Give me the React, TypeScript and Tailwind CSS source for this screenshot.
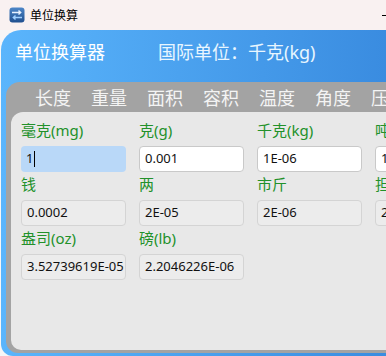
import React from "react";

type Field = { label: string; value: string; kind: "focus" | "edit" | "read" };

const rows: Field[][] = [
  [
    { label: "毫克(mg)", value: "1", kind: "focus" },
    { label: "克(g)", value: "0.001", kind: "edit" },
    { label: "千克(kg)", value: "1E-06", kind: "edit" },
    { label: "吨", value: "1E-09", kind: "edit" },
  ],
  [
    { label: "钱", value: "0.0002", kind: "read" },
    { label: "两", value: "2E-05", kind: "read" },
    { label: "市斤", value: "2E-06", kind: "read" },
    { label: "担", value: "2E-08", kind: "read" },
  ],
  [
    { label: "盎司(oz)", value: "3.52739619E-05", kind: "read" },
    { label: "磅(lb)", value: "2.2046226E-06", kind: "read" },
  ],
];

const tabs = ["长度", "重量", "面积", "容积", "温度", "角度", "压强"];

function AppIcon() {
  return (
    <svg width="16" height="16" viewBox="0 0 16 16">
      <defs>
        <linearGradient id="ic" x1="0" y1="0" x2="0" y2="1">
          <stop offset="0" stopColor="#4d86c8" />
          <stop offset="1" stopColor="#1f4f8f" />
        </linearGradient>
      </defs>
      <rect x="0.5" y="0.5" width="15" height="15" rx="3" fill="url(#ic)" />
      <path d="M3 5.5h8.5M9.5 3.5l2.2 2-2.2 2" stroke="#e8f2ff" strokeWidth="1.4" fill="none" />
      <path d="M13 10.5H4.5M6.5 8.5l-2.2 2 2.2 2" stroke="#9fd0ff" strokeWidth="1.4" fill="none" />
    </svg>
  );
}

function Input({ f }: { f: Field }) {
  const base = "mt-[5px] h-[26px] rounded-[4px] pl-[5px] flex items-center text-[13px] text-[#111]";
  if (f.kind === "focus") {
    return (
      <div className={`${base} bg-[#b9d8f8]`}>
        {f.value}
        <span className="ml-[1px] w-[1px] h-[16px] bg-black" />
      </div>
    );
  }
  if (f.kind === "edit") {
    return <div className={`${base} bg-white border border-[#c9c9c9]`}>{f.value}</div>;
  }
  return <div className={`${base} bg-[#ececec] border border-[#d4d4d4]`}>{f.value}</div>;
}

export default function App() {
  return (
    <div className="w-[386px] h-[356px] overflow-hidden bg-[#f6f6f6] flex flex-col font-['Noto_Sans','Noto_Sans_CJK_SC',sans-serif]">
      <div className="h-[30px] flex-none bg-[#f9f1f1] flex items-center pl-[9px] relative">
        <AppIcon />
        <span className="ml-[5px] text-[12px] leading-none text-black font-['Noto_Sans_CJK_SC',sans-serif]">单位换算</span>
        <span className="absolute left-[382px] top-[15px] w-[10px] h-[1px] bg-black" />
      </div>

      <div className="flex-1 ml-[1px] rounded-tl-[20px] rounded-bl-[12px] bg-gradient-to-r from-[#5ab5fc] to-[#3a8ce0] pl-[5px] pb-[3px] flex flex-col">
        <div className="h-[52px] flex-none flex items-start pt-[10px] pl-[9px] text-[18px] leading-[24px] whitespace-nowrap">
          <span className="w-[143px] text-white">单位换算器</span>
          <span className="text-[#e8f6ff]">国际单位：千克(kg)</span>
        </div>

        <div className="flex-1 w-[420px] rounded-tl-[14px] rounded-bl-[12px] bg-[#a3a3a3] pl-[5px] pb-[3px] flex flex-col">
          <div className="h-[30px] flex-none flex items-center pl-[24px] gap-[20px] text-[18px] leading-none text-[#f4f4f4] whitespace-nowrap font-['Noto_Sans_CJK_SC',sans-serif]">
            {tabs.map((t) => (
              <span key={t}>{t}</span>
            ))}
          </div>

          <div className="flex-1 rounded-tl-[12px] rounded-bl-[10px] bg-[#e8e8e8] pl-[10px] pt-[8px]">
            <div className="grid grid-cols-[105px_105px_105px_105px] gap-x-[13px] gap-y-[2px] w-max">
              {rows.map((row, ri) =>
                row.map((f, ci) => (
                  <div key={`${ri}-${ci}`} className="flex flex-col">
                    <div className="h-[21px] text-[15px] leading-[21px] text-[#22912a] whitespace-nowrap">{f.label}</div>
                    <Input f={f} />
                  </div>
                ))
              )}
            </div>
          </div>
        </div>
      </div>
    </div>
  );
}
